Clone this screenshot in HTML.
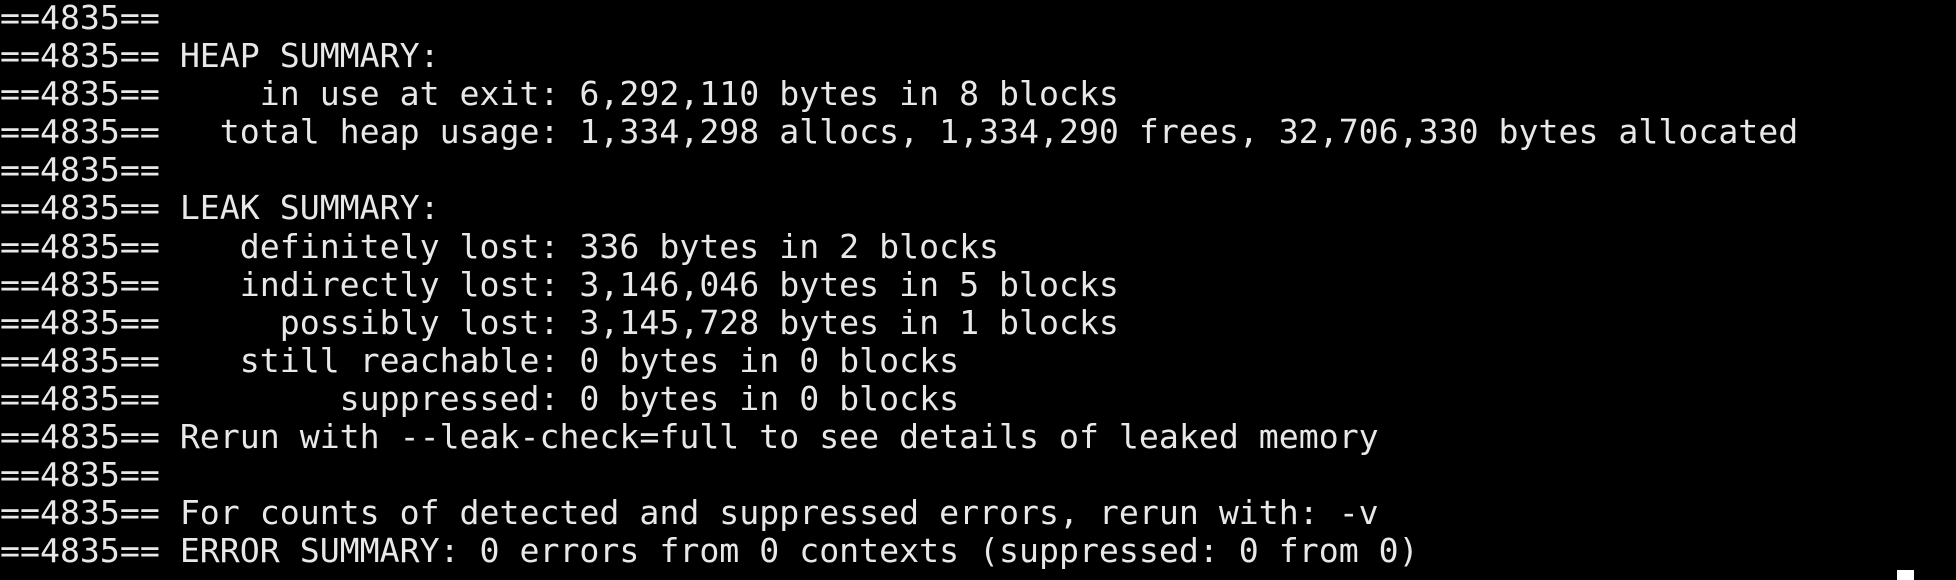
<!DOCTYPE html>
<html><head><style>
html,body{margin:0;padding:0;background:#000;width:1956px;height:576px;overflow:hidden}
pre{margin:0;position:absolute;left:0;top:-1px;font-family:"DejaVu Sans Mono","Liberation Mono",monospace;font-size:33.2px;line-height:38.1px;color:#e8e8e8;white-space:pre}
.cur{position:absolute;left:1897px;top:570px;width:17px;height:10px;background:#fff}
</style></head><body>
<pre>==4835==
==4835== HEAP SUMMARY:
==4835==     in use at exit: 6,292,110 bytes in 8 blocks
==4835==   total heap usage: 1,334,298 allocs, 1,334,290 frees, 32,706,330 bytes allocated
==4835==
==4835== LEAK SUMMARY:
==4835==    definitely lost: 336 bytes in 2 blocks
==4835==    indirectly lost: 3,146,046 bytes in 5 blocks
==4835==      possibly lost: 3,145,728 bytes in 1 blocks
==4835==    still reachable: 0 bytes in 0 blocks
==4835==         suppressed: 0 bytes in 0 blocks
==4835== Rerun with --leak-check=full to see details of leaked memory
==4835==
==4835== For counts of detected and suppressed errors, rerun with: -v
==4835== ERROR SUMMARY: 0 errors from 0 contexts (suppressed: 0 from 0)</pre>
<div class="cur"></div>
</body></html>
